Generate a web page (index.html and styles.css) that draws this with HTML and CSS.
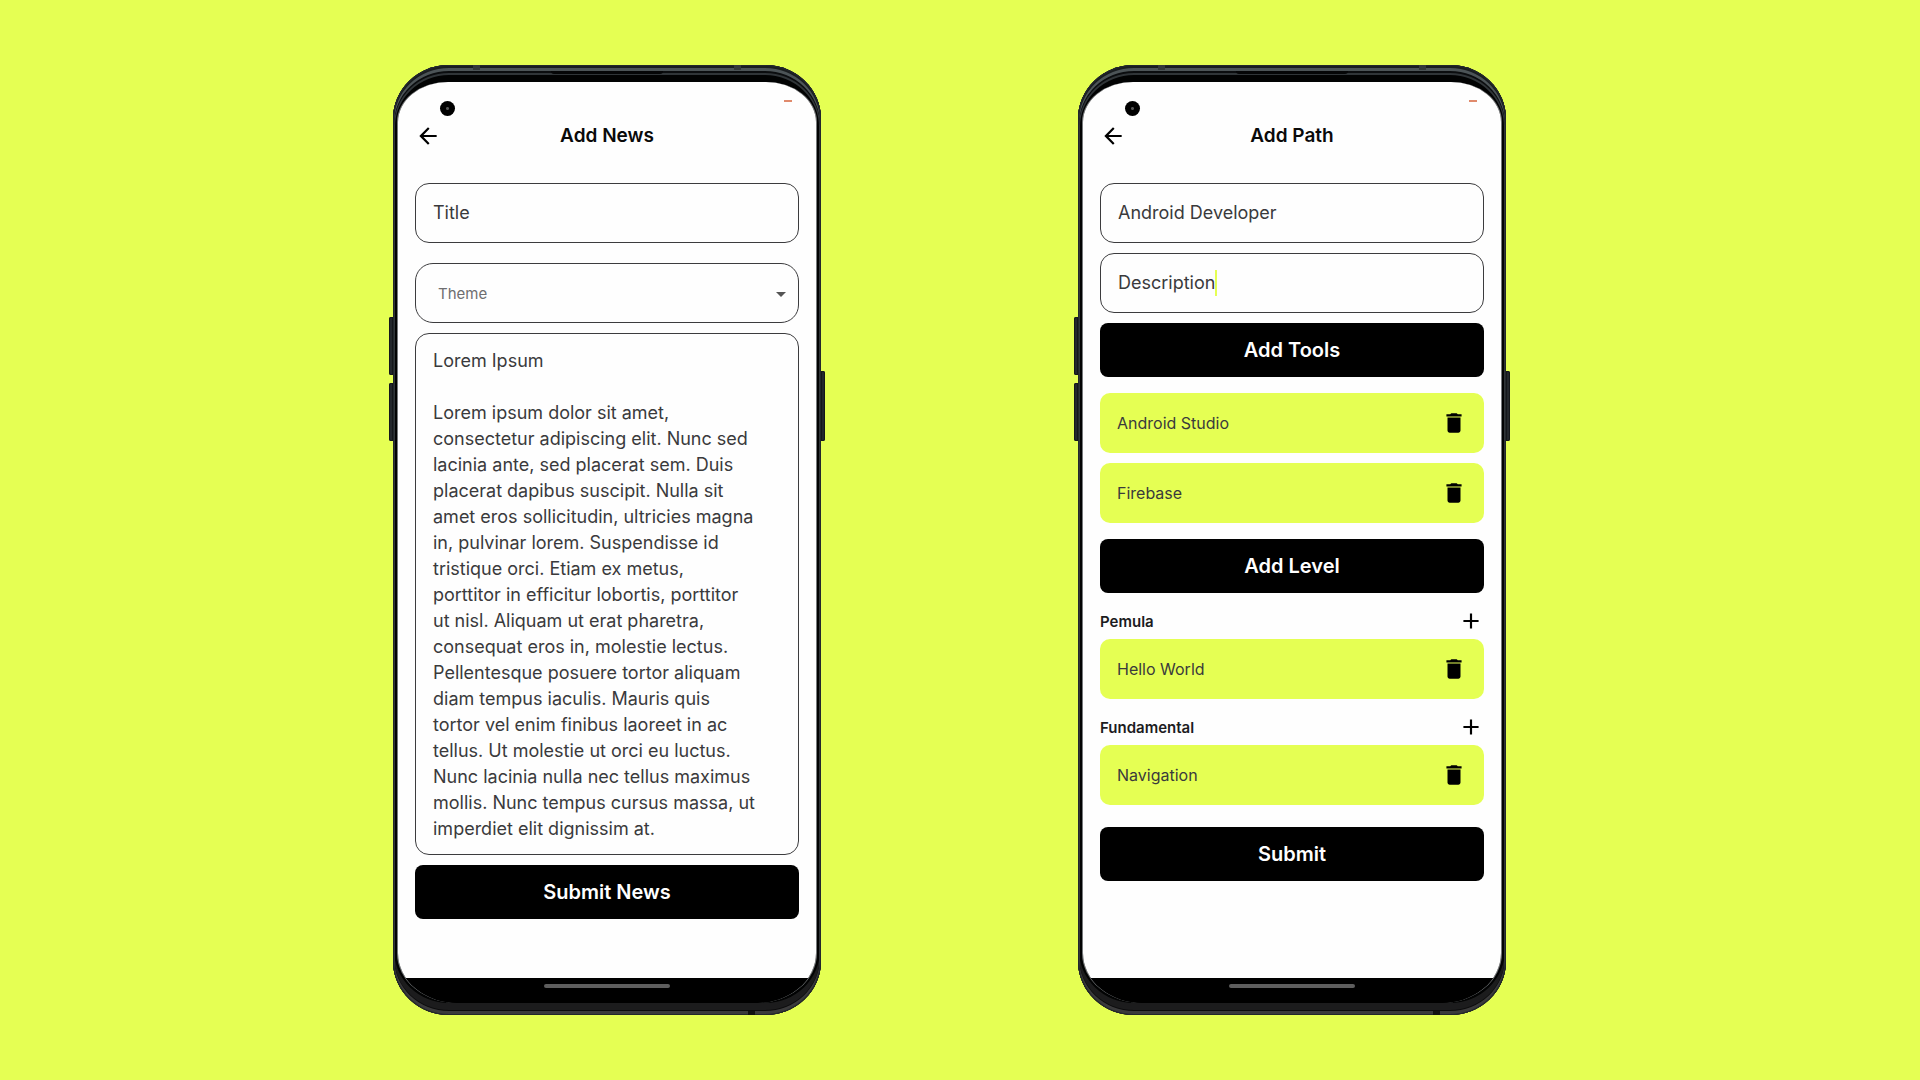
FILE: index.html
```html
<!DOCTYPE html>
<html lang="en">
<head>
<meta charset="utf-8">
<meta name="viewport" content="width=device-width, initial-scale=1">
<title>Add News and Add Path</title>
<link rel="stylesheet" href="styles.css">
</head>
<body>
<svg class="sprite" aria-hidden="true">
  <symbol id="back" viewBox="0 0 24 24"><path d="M20 11H7.83l5.59-5.59L12 4l-8 8 8 8 1.41-1.41L7.83 13H20v-2z"/></symbol>
  <symbol id="plus" viewBox="0 0 24 24"><path d="M19 13h-6v6h-2v-6H5v-2h6V5h2v6h6v2z"/></symbol>
  <symbol id="trash" viewBox="0 0 24 24"><path d="M6 19c0 1.1.9 2 2 2h8c1.1 0 2-.9 2-2V7H6v12zM19 4h-3.5l-1-1h-5l-1 1H5v2h14V4z"/></symbol>
</svg>
<main class="stage">
  <section class="phone">
    <span class="side-key volume-up"></span><span class="side-key volume-down"></span><span class="side-key power"></span>
    <span class="antenna antenna-left"></span><span class="antenna antenna-right"></span><span class="antenna antenna-bottom"></span><span class="speaker"></span>
    <div class="screen">
      <form class="app">
        <span class="camera"></span><span class="status"></span>
        <header class="bar">
          <button type="button" class="icon-button" aria-label="Back"><svg class="icon"><use href="#back"/></svg></button>
          <h1 class="heading">Add News</h1>
        </header>
        <label class="field"><input class="input" type="text" aria-label="Title" value="Title"></label>
        <div class="field select-field">
          <select class="select" aria-label="Theme"><option>Theme</option></select>
        </div>
        <textarea class="area" aria-label="Content" rows="19" spellcheck="false">Lorem Ipsum

Lorem ipsum dolor sit amet,
consectetur adipiscing elit. Nunc sed
lacinia ante, sed placerat sem. Duis
placerat dapibus suscipit. Nulla sit
amet eros sollicitudin, ultricies magna
in, pulvinar lorem. Suspendisse id
tristique orci. Etiam ex metus,
porttitor in efficitur lobortis, porttitor
ut nisl. Aliquam ut erat pharetra,
consequat eros in, molestie lectus.
Pellentesque posuere tortor aliquam
diam tempus iaculis. Mauris quis
tortor vel enim finibus laoreet in ac
tellus. Ut molestie ut orci eu luctus.
Nunc lacinia nulla nec tellus maximus
mollis. Nunc tempus cursus massa, ut
imperdiet elit dignissim at.</textarea>
        <button type="button" class="action">Submit News</button>
      </form>
      <div class="nav"><span class="pill"></span></div>
    </div>
  </section>

  <section class="phone">
    <span class="side-key volume-up"></span><span class="side-key volume-down"></span><span class="side-key power"></span>
    <span class="antenna antenna-left"></span><span class="antenna antenna-right"></span><span class="antenna antenna-bottom"></span><span class="speaker"></span>
    <div class="screen">
      <form class="app">
        <span class="camera"></span><span class="status"></span>
        <header class="bar">
          <button type="button" class="icon-button" aria-label="Back"><svg class="icon"><use href="#back"/></svg></button>
          <h1 class="heading">Add Path</h1>
        </header>
        <label class="field"><input class="input" type="text" aria-label="Path name" value="Android Developer"></label>
        <label class="field"><input class="input input-active" type="text" aria-label="Description" value="Description"><span class="caret"></span></label>
        <button type="button" class="action">Add Tools</button>
        <ul class="list tools">
          <li class="item">Android Studio<button type="button" class="icon-button" aria-label="Delete Android Studio"><svg class="icon"><use href="#trash"/></svg></button></li>
          <li class="item">Firebase<button type="button" class="icon-button" aria-label="Delete Firebase"><svg class="icon"><use href="#trash"/></svg></button></li>
        </ul>
        <button type="button" class="action">Add Level</button>
        <div class="level">
          <h2 class="level-name">Pemula</h2>
          <button type="button" class="icon-button" aria-label="Add to Pemula"><svg class="icon"><use href="#plus"/></svg></button>
        </div>
        <ul class="list">
          <li class="item">Hello World<button type="button" class="icon-button" aria-label="Delete Hello World"><svg class="icon"><use href="#trash"/></svg></button></li>
        </ul>
        <div class="level">
          <h2 class="level-name">Fundamental</h2>
          <button type="button" class="icon-button" aria-label="Add to Fundamental"><svg class="icon"><use href="#plus"/></svg></button>
        </div>
        <ul class="list">
          <li class="item">Navigation<button type="button" class="icon-button" aria-label="Delete Navigation"><svg class="icon"><use href="#trash"/></svg></button></li>
        </ul>
        <button type="button" class="action submit-path">Submit</button>
      </form>
      <div class="nav"><span class="pill"></span></div>
    </div>
  </section>
</main>
</body>
</html>
```
FILE: styles.css
```css
:root {
  --lime: #e5ff53;
  --ink: #3a3a3c;
}

* { box-sizing: border-box; }

body {
  margin: 0;
  background: var(--lime);
  color: var(--ink);
  font-family: Inter, "Liberation Sans", sans-serif;
}

button, input, select, textarea {
  margin: 0;
  padding: 0;
  border: 0;
  outline: 0;
  background: none;
  color: inherit;
  font-family: inherit;
}

.sprite { display: none; }

.stage {
  display: flex;
  flex-wrap: wrap;
  justify-content: center;
  align-items: center;
  gap: 64px 257px;
  min-height: 100vh;
  padding: 64px 21px 64px 0;
}

/* Phone body */
.phone {
  position: relative;
  display: flex;
  flex: 0 1 428px;
  min-height: 950px;
  padding: 17px 5px 12px;
  border-radius: 56px / 54px;
  background: #020303;
  box-shadow:
    inset 0 0 0 1px #23282b,
    inset 0 2px 0 1px #1a1e20,
    inset 0 5px 0 1px #4c5457,
    inset 0 7px 0 1px #0b0d0f,
    inset 0 8px 0 2px #303538,
    inset 0 -3px 0 1px #3a3a3b,
    inset 0 -4px 0 1px #0c0c0d,
    inset 0 -11px 0 1px #1c1c1d;
}

.side-key {
  position: absolute;
  width: 4px;
  height: 58px;
  background: #23272c;
  box-shadow: inset 0 0 0 1px #14171a;
}
.volume-up { top: 252px; left: -4px; border-radius: 2px 0 0 2px; }
.volume-down { top: 318px; left: -4px; border-radius: 2px 0 0 2px; }
.power { top: 306px; right: -4px; height: 70px; border-radius: 0 2px 2px 0; }

.antenna {
  position: absolute;
  width: 7px;
  height: 5px;
  background: #34393b;
}
.antenna-left { top: 0; left: 80px; }
.antenna-right { top: 0; right: 80px; }
.antenna-bottom { right: 66px; bottom: 0; height: 4px; background: #111; }

.speaker {
  position: absolute;
  top: 6px;
  left: 50%;
  width: 112px;
  height: 3px;
  margin-left: -56px;
  border-radius: 0 0 4px 4px;
  background: #050607;
}

.screen {
  display: flex;
  flex: 1;
  flex-direction: column;
  min-width: 0;
  overflow: hidden;
  border-radius: 50px 50px 60px 60px / 40px 40px 50px 50px;
  background: #000;
  box-shadow: -1px 0 #777a7c, 1px 0 #777a7c;
}

.app {
  position: relative;
  display: flex;
  flex: 1;
  flex-direction: column;
  gap: 10px;
  padding: 32px 17px;
  background: #fefefe;
}

.camera {
  position: absolute;
  top: 19px;
  left: 42px;
  width: 15px;
  height: 15px;
  border-radius: 50%;
  background: radial-gradient(circle, #555 0 1px, #000 2px);
}

.status {
  position: absolute;
  top: 18px;
  right: 24px;
  width: 8px;
  height: 2px;
  background: #e08a6c;
}

.bar {
  display: grid;
  grid-template-columns: 26px 1fr 26px;
  align-items: center;
  height: 44px;
  margin-bottom: 15px;
  color: #0a0a0a;
}

.heading {
  margin: 0;
  font-size: 19px;
  font-weight: 600;
  line-height: 24px;
  text-align: center;
}

.icon-button {
  display: flex;
  flex: none;
  color: #000;
  cursor: pointer;
}

.icon {
  width: 26px;
  height: 26px;
  fill: currentColor;
}

.field {
  display: flex;
  align-items: center;
  height: 60px;
  padding: 0 17px;
  border: 1px solid #3c3c3e;
  border-radius: 14px;
}

.input {
  flex: 1;
  min-width: 0;
  font-size: 18px;
  line-height: 26px;
}

.input-active {
  flex: none;
  field-sizing: content;
}

.caret {
  width: 2px;
  height: 26px;
  background: var(--lime);
}

.select-field {
  position: relative;
  margin-top: 10px;
  padding: 0;
  border-radius: 18px;
}

.select-field::after {
  position: absolute;
  top: 28px;
  right: 12px;
  border: 5px solid transparent;
  border-top-color: #555;
  border-bottom: 0;
  content: "";
  pointer-events: none;
}

.select {
  width: 100%;
  height: 100%;
  padding: 0 22px;
  appearance: none;
  color: #6e6e70;
  font-size: 15px;
}

.area {
  height: 522px;
  padding: 14px 0 0 17px;
  overflow: hidden;
  border: 1px solid #3c3c3e;
  border-radius: 14px;
  font-size: 18px;
  line-height: 26px;
  resize: none;
  white-space: pre;
}

.action {
  height: 54px;
  border-radius: 8px;
  background: #000;
  color: #fff;
  font-size: 20px;
  font-weight: 600;
  line-height: 24px;
}

.list {
  display: flex;
  flex-direction: column;
  gap: 10px;
  margin: 0;
  padding: 0;
  list-style: none;
}

.tools { margin: 6px 0; }

.item {
  display: flex;
  justify-content: space-between;
  align-items: center;
  height: 60px;
  padding: 0 17px;
  border-radius: 10px;
  background: var(--lime);
  font-size: 16px;
}

.level {
  display: flex;
  justify-content: space-between;
  align-items: center;
  height: 26px;
  margin-top: 5px;
  margin-bottom: -5px;
}

.level-name {
  margin: 0;
  color: #1c1c1e;
  font-size: 15px;
  font-weight: 600;
}

.submit-path { margin-top: 12px; }

.nav {
  display: flex;
  justify-content: center;
  height: 25px;
  padding-top: 6px;
  background: #000;
}

.pill {
  width: 126px;
  height: 4px;
  border-radius: 2px;
  background: #5e5e5e;
}
```
